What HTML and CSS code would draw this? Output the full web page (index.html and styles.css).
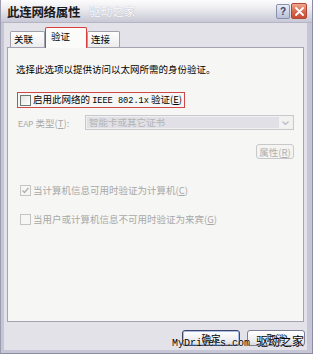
FILE: index.html
```html
<!DOCTYPE html>
<html lang="zh-CN">
<head>
<meta charset="utf-8">
<title>属性</title>
<link rel="stylesheet" href="styles.css">
</head>
<body>
<div class="window">
  <div class="titlebar">
    <span class="title">此连网络属性</span>
    <span class="title-mark">驱动之家</span>
    <span class="tb-spacer"></span>
    <span class="tb-btn help">?</span>
    <span class="tb-btn close"><svg width="9" height="9" viewBox="0 0 9 9"><path d="M1 1 L8 8 M8 1 L1 8" stroke="#fff" stroke-width="1.8" stroke-linecap="round"/></svg></span>
  </div>
  <div class="client">
    <div class="tabs">
      <div class="tab">关联</div>
      <div class="tab active">验证</div>
      <div class="tab">连接</div>
    </div>
    <div class="panel">
      <p class="intro">选择此选项以提供访问以太网所需的身份验证。</p>
      <label class="check highlight"><span class="box"></span><span>启用此网络的 <span class="lat">IEEE 802.1x</span> 验证(<u>E</u>)</span></label>
      <div class="eap-row">
        <span class="eap-label"><span class="lat">EAP</span> 类型(<u>T</u>):</span>
        <div class="combo">
          <span class="combo-text">智能卡或其它证书</span>
          <span class="combo-arrow"><svg width="7" height="4" viewBox="0 0 7 4"><path d="M0.5 0.5 L3.5 3.5 L6.5 0.5" fill="none" stroke="#b8b8c8" stroke-width="1.2"/></svg></span>
        </div>
      </div>
      <div class="prop-row"><span class="btn small disabled">属性(<u>R</u>)</span></div>
      <label class="check disabled first"><span class="box"><svg width="9" height="9" viewBox="0 0 9 9"><path d="M1.5 4.5 L3.5 6.5 L7.5 2" fill="none" stroke="#b0b0b0" stroke-width="1.4"/></svg></span><span>当计算机信息可用时验证为计算机(<u>C</u>)</span></label>
      <label class="check disabled second"><span class="box"></span><span>当用户或计算机信息不可用时验证为来宾(<u>G</u>)</span></label>
    </div>
    <div class="buttons">
      <span class="btn default">确定</span>
      <span class="btn">取消</span>
    </div>
  </div>
  <div class="watermark"><span class="wm-latin">MyDrivers.com</span><span class="wm-cjk">驱动之家</span></div>
</div>
</body>
</html>
```

FILE: styles.css
```css
html, body {
  margin: 0;
  padding: 0;
  background: #ffffff;
}
body {
  width: 313px;
  height: 354px;
  overflow: hidden;
  font-family: "Noto Sans CJK SC", "Liberation Sans", sans-serif;
  font-size: 9.5px;
  color: #000;
}
.window {
  position: relative;
  width: 313px;
  height: 354px;
  box-sizing: border-box;
  display: flex;
  flex-direction: column;
  background: #c6c6d6;
  border-left: 1px solid #9c9cb0;
  border-right: 1px solid #8c8ca4;
  border-bottom: 1px solid #8c8ca4;
}
.titlebar {
  height: 23px;
  flex: none;
  display: flex;
  align-items: center;
  padding: 0 5px 0 6px;
  box-sizing: border-box;
  background: linear-gradient(#fcfcfd 0%, #eeeef2 35%, #dcdce4 65%, #c8c8d6 100%);
  border-bottom: 1px solid #b4b4c4;
}
.title {
  font-weight: bold;
  font-size: 12.5px;
  letter-spacing: -0.3px;
  color: #1a1a1a;
}
.title-mark {
  margin-left: 9px;
  font-size: 11.5px;
  color: #ffffff;
  text-shadow: 0 0 1px #9898a8;
}
.tb-spacer { flex: 1; }
.tb-btn {
  width: 14px;
  height: 15px;
  box-sizing: border-box;
  border-radius: 2px;
  display: flex;
  align-items: center;
  justify-content: center;
}
.help {
  margin-right: 1px;
  border: 1px solid #8890b0;
  background: linear-gradient(#e8ecf6, #b8c0d8);
  color: #3a4268;
  font-family: "Liberation Sans", sans-serif;
  font-weight: bold;
  font-size: 10px;
}
.close {
  width: 16px;
  height: 16px;
  border: 1px solid #b04838;
  background: linear-gradient(#f0a890, #d8664c 55%, #c84c34);
}
.client {
  flex: 1;
  margin: 0 5px 3px 3px;
  padding: 4px 3px 0 3px;
  background: #e2e2e8;
  display: flex;
  flex-direction: column;
}
.tabs {
  height: 20px;
  display: flex;
  align-items: flex-end;
  padding-left: 3px;
  position: relative;
  z-index: 1;
}
.tab {
  height: 16px;
  box-sizing: border-box;
  padding: 1px 0 0 3px;
  width: 35px;
  border: 1px solid #a0a0ac;
  border-bottom: none;
  border-radius: 2px 2px 0 0;
  background: linear-gradient(#ffffff, #ececec);
  line-height: 13px;
}
.tab + .tab { width: 33px; }
.tab.active {
  width: 42px;
  height: 21px;
  margin-bottom: -1px;
  padding: 2px 0 0 5px;
  border: 1px solid #d83c3c;
  border-bottom: none;
  background: #fbfbfa;
}
.panel {
  height: 275px;
  box-sizing: border-box;
  border: 1px solid #a4a4b0;
  background: #f6f6f4;
  padding: 15px 8px 0 8px;
  display: flex;
  flex-direction: column;
  align-items: flex-start;
}
.intro {
  margin: 0;
  line-height: 12px;
}
.lat {
  font-family: "Liberation Mono", monospace;
  font-size: 8.6px;
}
.check {
  display: flex;
  align-items: center;
  gap: 2px;
  line-height: 12px;
}
.box {
  width: 11px;
  height: 11px;
  box-sizing: border-box;
  border: 1px solid #6a7a70;
  background: linear-gradient(135deg, #e4e4de, #ffffff);
  display: flex;
  align-items: center;
  justify-content: center;
  flex: none;
}
.highlight {
  margin-top: 17px;
  margin-left: 1px;
  height: 16px;
  box-sizing: border-box;
  padding: 0 2px 0 2px;
  border: 1px solid #d04848;
}
.disabled { color: #a8a8a8; }
.check.disabled { padding-left: 4px; }
.check.disabled .box {
  border-color: #c4c4c4;
  background: #f6f6f4;
}
.eap-row {
  margin-top: 7px;
  align-self: stretch;
  display: flex;
  align-items: center;
  color: #a8a8a8;
}
.eap-label {
  width: 67px;
  padding-left: 2px;
}
.combo {
  flex: 1;
  margin-right: 1px;
  height: 15px;
  box-sizing: border-box;
  border: 1px solid #c8c8d0;
  background: #f0f0ee;
  display: flex;
  align-items: stretch;
  padding: 1px;
}
.combo-text {
  flex: 1;
  background: #e0e0e6;
  color: #b4b4b4;
  line-height: 11px;
  padding-left: 2px;
}
.combo-arrow {
  width: 13px;
  display: flex;
  align-items: center;
  justify-content: center;
  background: #f2f2f0;
}
.prop-row {
  margin-top: 14px;
  align-self: stretch;
  display: flex;
  justify-content: flex-end;
  padding-right: 1px;
}
.btn {
  display: flex;
  align-items: center;
  justify-content: center;
  width: 58px;
  height: 16px;
  box-sizing: border-box;
  border: 1px solid #7a7e96;
  border-radius: 3px;
  background: linear-gradient(#ffffff, #ececf0 70%, #d8d8e0);
  line-height: 12px;
}
.btn.small {
  width: 38px;
  height: 15px;
}
.btn.disabled {
  border-color: #c8c8c8;
  background: #f4f4f2;
  color: #b0b0b0;
}
.btn.default {
  border-color: #3c4468;
  box-shadow: inset 0 0 0 1px #a8bce8;
}
.check.first { margin-top: 25px; }
.check.second { margin-top: 17px; }
.buttons {
  margin-top: 8px;
  display: flex;
  justify-content: flex-end;
  gap: 7px;
  margin-right: -1px;
}
.watermark {
  position: absolute;
  left: 171px;
  top: 332px;
  display: flex;
  align-items: baseline;
  color: #000;
  text-shadow: 0 0 1px #fff;
}
.wm-latin {
  font-family: "Liberation Mono", monospace;
  font-size: 10px;
}
.wm-cjk {
  margin-left: 6px;
  font-size: 12px;
}
```
